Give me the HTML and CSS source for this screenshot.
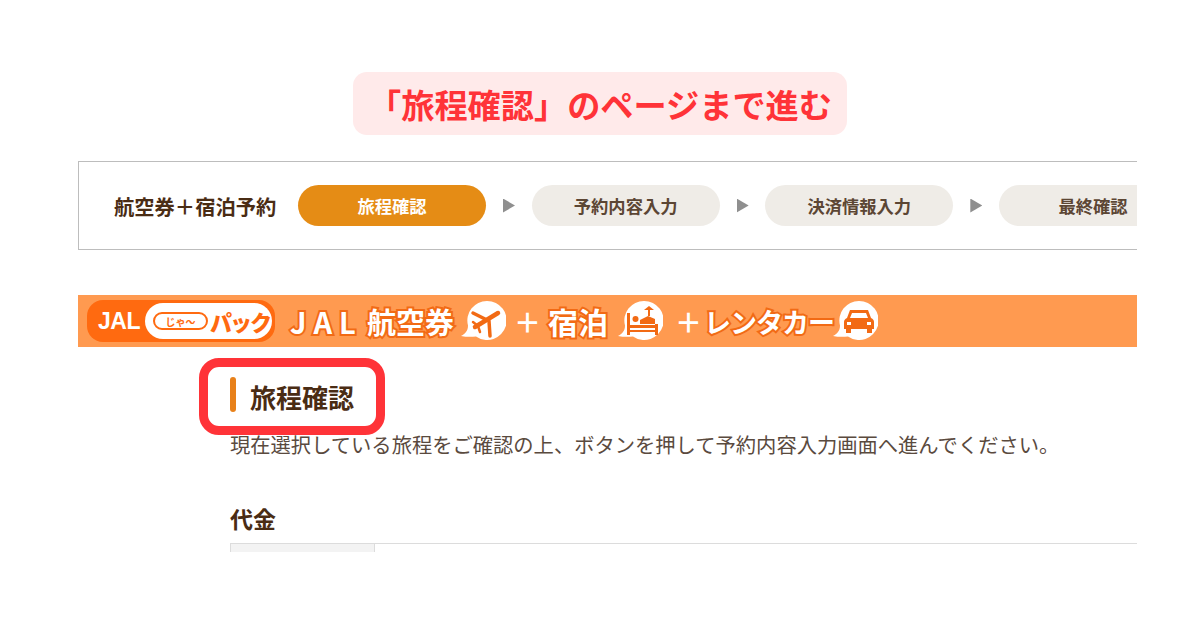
FILE: index.html
```html
<!DOCTYPE html>
<html lang="ja">
    <head>
        <meta charset="UTF-8" />
        <meta name="viewport" content="width=device-width, initial-scale=1.0" />
        <title>旅程確認</title>

        <link rel="stylesheet" href="styles.css">
    </head>

    <body>
        <div class="notice-row">
            <p class="notice">「旅程確認」のページまで進む</p>
        </div>

        <div class="shot">
            <div class="steps">
                <span class="steps-label">航空券＋宿泊予約</span>
                <span class="step step-active">旅程確認</span>
                <span class="arrow"></span>
                <span class="step">予約内容入力</span>
                <span class="arrow"></span>
                <span class="step">決済情報入力</span>
                <span class="arrow"></span>
                <span class="step">最終確認</span>
            </div>

            <div class="banner">
                <div class="pack">
                    <span class="pack-jal">JAL</span>
                    <span class="pack-name"><span class="pack-wave">じゃ〜</span>パック</span>
                </div>
                <span class="banner-text banner-latin">JAL</span>
                <span class="banner-text banner-air">航空券</span>
                <svg class="bubble bubble-plane" viewBox="0 0 46 44" width="46" height="44">
                    <path d="M27 2a19.500 19.500 0 1 1-11 35.500C11 38 6 38 1 37c4-2 7-5 7-10.500A19.500 19.500 0 0 1 27 2z" fill="#fff" />
                    <g fill="none" stroke="#f26a14" stroke-linecap="round" stroke-linejoin="round">
                        <path d="M38 14L15 28" stroke-width="4.500" />
                        <path d="M13 14l16 8 1 15" stroke-width="3.500" />
                        <path d="M13 23l5 4 2 6" stroke-width="2.500" />
                    </g>
                </svg>
                <span class="banner-plus">＋</span>
                <span class="banner-text banner-stay">宿泊</span>
                <svg class="bubble bubble-bed" viewBox="0 0 46 44" width="46" height="44">
                    <path d="M27 2a19.500 19.500 0 1 1-11 35.500C11 38 6 38 1 37c4-2 7-5 7-10.500A19.500 19.500 0 0 1 27 2z" fill="#fff" />
                    <path d="M10 14h3v12h25v-1h3v11h-3v-3H13v3h-3zM13 29v2h25v-2z" fill="#f26a14" fill-rule="evenodd" />
                    <circle cx="18.500" cy="20" r="3" fill="#f26a14" />
                    <path d="M23 25v-4l8-4 7 3v5z" fill="#f26a14" />
                    <path d="M27 11l5-4 5 4h-4v6h-2v-6z" fill="#f26a14" />
                </svg>
                <span class="banner-plus banner-plus-wide">＋</span>
                <span class="banner-text banner-kana">レンタカー</span>
                <svg class="bubble bubble-car" viewBox="0 0 46 44" width="46" height="44">
                    <path d="M27 2a19.500 19.500 0 1 1-11 35.500C11 38 6 38 1 37c4-2 7-5 7-10.500A19.500 19.500 0 0 1 27 2z" fill="#fff" />
                    <path d="M18 11h18l3 8c2 1 3 2 3 4v7h-2v4h-5v-4H19v4h-5v-4h-2v-7c0-2 1-3 3-4z" fill="#f26a14" />
                    <path d="M20 14h14l2 5H18z" fill="#fff" />
                    <path d="M15 23h4v3h-4zM35 23h4v3h-4z" fill="#fff" />
                </svg>
            </div>

            <div class="content">
                <div class="title">
                    <h1>旅程確認</h1>
                    <div class="title-mark"></div>
                </div>
                <p class="lead">現在選択している旅程をご確認の上、ボタンを押して予約内容入力画面へ進んでください。</p>
                <h2>代金</h2>
                <div class="price-table">
                    <div class="price-head"></div>
                </div>
            </div>
        </div>
    </body>
</html>
```

FILE: styles.css
```css
* {
    margin: 0;
    padding: 0;
    box-sizing: border-box;
}

body {
    background-color: #fff;
    color: #4a2c14;
    font-family: "Noto Sans CJK JP", "Noto Sans", sans-serif;
    height: 630px;
    overflow: hidden;
}

.notice-row {
    display: flex;
    justify-content: center;
    padding-top: 72px;
}

.notice {
    width: 494px;
    height: 63px;
    display: flex;
    align-items: center;
    justify-content: center;
    background-color: #ffeaea;
    border-radius: 14px;
    color: #ff3338;
    font-size: 33.2px;
    font-weight: 700;
    white-space: nowrap;
}

.shot {
    width: 1059px;
    margin-left: 78px;
    margin-top: 26px;
    overflow: hidden;
}

.steps {
    height: 89px;
    display: flex;
    align-items: center;
    padding-left: 35px;
    border: 1px solid #bdbdbd;
    border-right: none;
}

.steps-label {
    width: 184px;
    flex-shrink: 0;
    font-size: 20.3px;
    font-weight: 700;
    white-space: nowrap;
}

.step {
    width: 188px;
    height: 41px;
    flex-shrink: 0;
    display: flex;
    align-items: center;
    justify-content: center;
    background-color: #efece7;
    border-radius: 21px;
    color: #5c4634;
    font-size: 17.3px;
    font-weight: 700;
    white-space: nowrap;
}

.step-active {
    background-color: #e58c15;
    color: #fff;
}

.arrow {
    width: 12px;
    height: 14px;
    flex-shrink: 0;
    margin: 0 16.67px 0 17px;
    background-color: #8f8f8f;
    clip-path: polygon(0 0, 100% 50%, 0 100%);
}

.banner {
    height: 52px;
    margin-top: 45px;
    display: flex;
    align-items: center;
    padding-left: 9px;
    background-color: #ff9a50;
    white-space: nowrap;
}

.pack {
    width: 188px;
    height: 42px;
    flex-shrink: 0;
    display: flex;
    align-items: center;
    padding: 2px 3px 2px 11px;
    background-color: #ff6a10;
    border-radius: 16px;
}

.pack-jal {
    width: 47px;
    color: #fff;
    font-family: "Liberation Sans", sans-serif;
    font-size: 23px;
    font-weight: 700;
    letter-spacing: -0.5px;
}

.pack-name {
    flex: 1;
    height: 36px;
    display: flex;
    align-items: center;
    gap: 2px;
    padding-left: 8px;
    background-color: #fff;
    border-radius: 18px;
    color: #ff6a10;
    font-size: 22px;
    font-weight: 900;
    letter-spacing: -2px;
}

.pack-wave {
    width: 55px;
    height: 18px;
    display: flex;
    align-items: center;
    justify-content: center;
    border: 2.5px solid #ff6a10;
    border-radius: 9px;
    font-size: 10px;
    font-weight: 700;
    letter-spacing: 0;
}

.banner-text {
    color: #fff;
    font-size: 29px;
    font-weight: 700;
    -webkit-text-stroke: 4px #f26a14;
    paint-order: stroke fill;
}

.banner-latin {
    width: 77px;
    margin-left: 15px;
    letter-spacing: 7px;
}

.banner-air {
    width: 90px;
}

.banner-stay {
    width: 62px;
    margin-left: 8px;
    font-size: 30px;
}

.banner-kana {
    width: 128px;
    margin-left: 3px;
    font-size: 27px;
    letter-spacing: -1px;
}

.banner-plus {
    width: 26px;
    margin-left: 8px;
    color: #fff;
    font-size: 27px;
    font-weight: 700;
}

.banner-plus-wide {
    margin-left: 12px;
}

.bubble {
    flex-shrink: 0;
}

.bubble-plane {
    margin-left: 3px;
}

.bubble-bed {
    margin-left: 7px;
}

.content {
    padding-left: 152px;
}

.title {
    position: relative;
    height: 74px;
    display: flex;
    align-items: center;
    padding-top: 21px;
}

.title::before {
    content: "";
    width: 6px;
    height: 35px;
    margin-right: 14px;
    background-color: #e8811a;
    border-radius: 3px;
}

h1 {
    margin-top: 4px;
    font-size: 26px;
    font-weight: 700;
    line-height: 1;
}

.title-mark {
    position: absolute;
    left: -31px;
    top: 11px;
    width: 186px;
    height: 77px;
    border: 9px solid #ff3338;
    border-radius: 20px;
}

.lead {
    margin-top: 9px;
    color: #5a4a3e;
    font-size: 20.3px;
    line-height: 28px;
    white-space: nowrap;
}

h2 {
    margin-top: 44px;
    font-size: 23px;
    font-weight: 700;
    line-height: 32px;
}

.price-table {
    margin-top: 9px;
    height: 9px;
    border-top: 1px solid #dcdcdc;
    overflow: hidden;
}

.price-head {
    width: 145px;
    height: 8px;
    background-color: #f3f3f3;
    border-left: 1px solid #dcdcdc;
    border-right: 1px solid #dcdcdc;
}
```
